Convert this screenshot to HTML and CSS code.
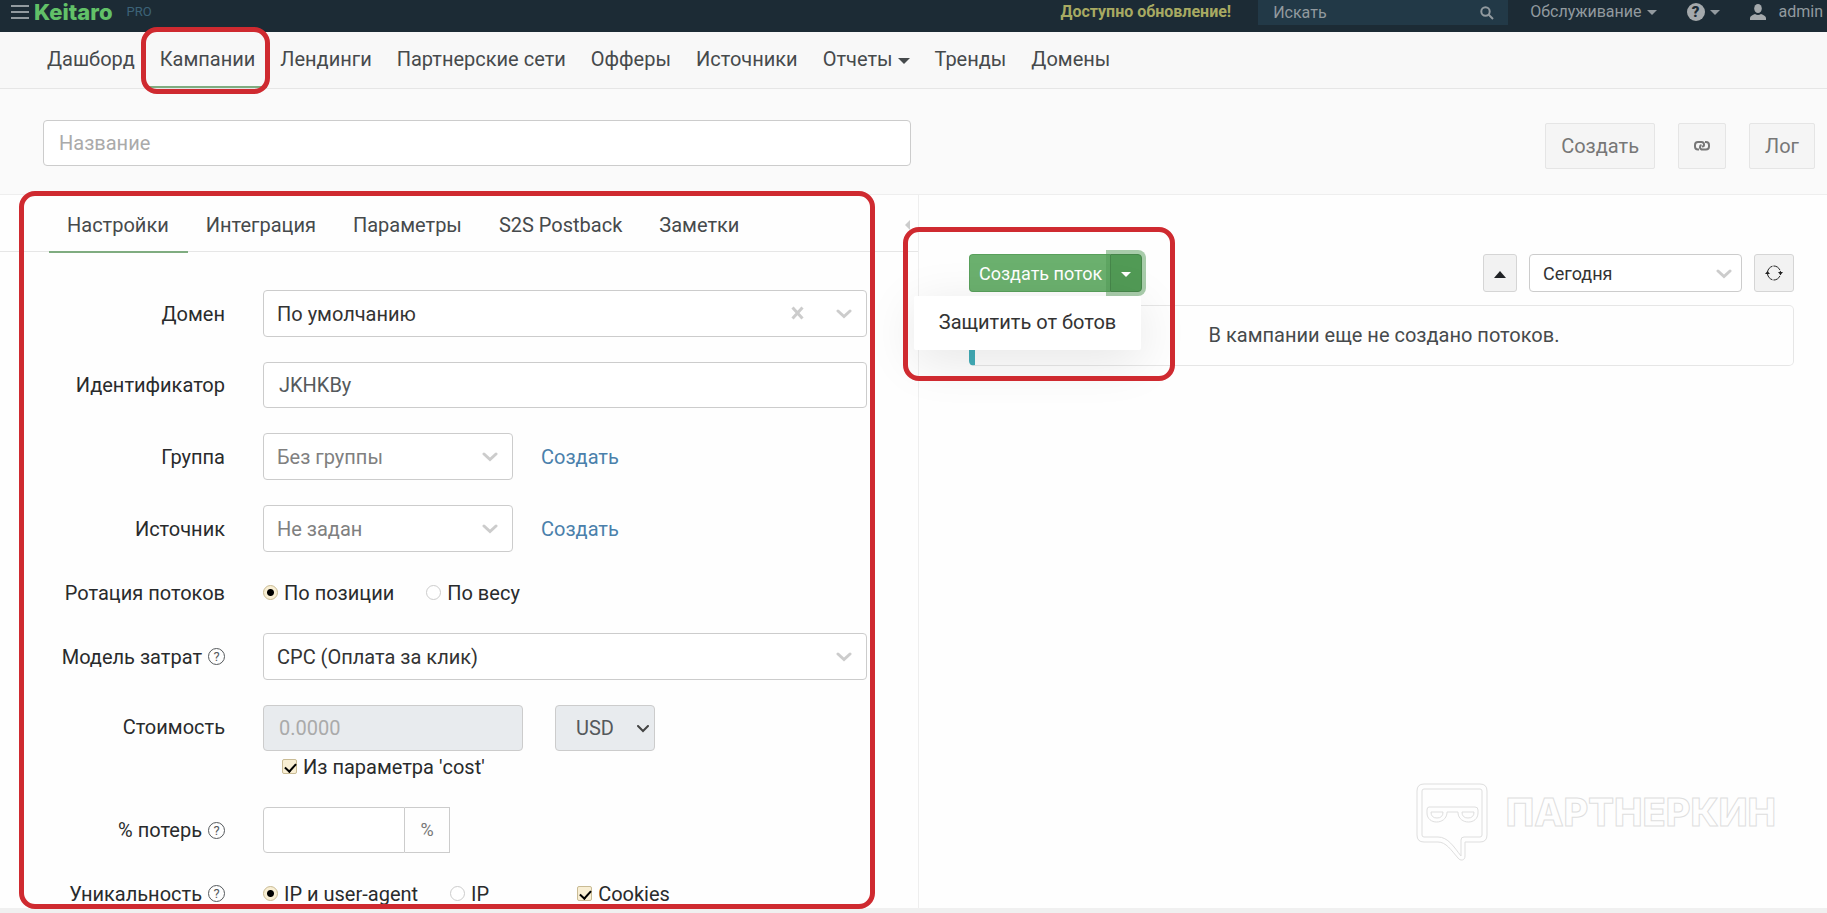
FILE: index.html
```
<!DOCTYPE html>
<html lang="ru">
<head>
    <meta charset="UTF-8">
    <meta name="viewport" content="width=device-width, initial-scale=1.0">
    <title>Keitaro - Кампании</title>
    <link rel="stylesheet" href="styles.css">
</head>
<body>
    <header class="topbar">
        <button class="menu-button" aria-label="Меню"><span></span><span></span><span></span></button>
        <a href="#" class="logo">Keitaro</a>
        <span class="edition">PRO</span>
        <a href="#" class="update-link">Доступно обновление!</a>
        <div class="search">
            <input type="text" placeholder="Искать" aria-label="Искать">
            <svg width="14" height="14" viewBox="0 0 14 14" fill="none" stroke="#929a9f" stroke-width="2"><circle cx="5.5" cy="5.5" r="4.2"/><path d="M8.5 8.5L13 13"/></svg>
        </div>
        <a href="#" class="top-link service">Обслуживание <i class="caret"></i></a>
        <a href="#" class="top-link help" aria-label="Помощь">
            <span class="help-badge">?</span>
            <i class="caret"></i>
        </a>
        <a href="#" class="top-link user">
            <svg width="16" height="16" viewBox="0 0 16 16" fill="#a4a9ac"><ellipse cx="8" cy="4.5" rx="3.8" ry="4.5"/><path d="M0 16v-2c0-2 2.500-3 5-4 2 1.300 4 1.300 6 0 2.500 1 5 2 5 4v2z"/></svg>
            admin
        </a>
    </header>

    <nav class="nav">
        <a href="#">Дашборд</a>
        <a href="#" class="active">Кампании<span class="mark mark-nav"></span></a>
        <a href="#">Лендинги</a>
        <a href="#">Партнерские сети</a>
        <a href="#">Офферы</a>
        <a href="#">Источники</a>
        <a href="#">Отчеты <i class="caret caret-big"></i></a>
        <a href="#">Тренды</a>
        <a href="#">Домены</a>
    </nav>

    <section class="heading">
        <input type="text" class="control name-input" placeholder="Название" aria-label="Название">
        <div class="actions">
            <button class="action">Создать</button>
            <button class="action action-icon" aria-label="Ссылка">
                <svg width="16" height="12" viewBox="0 0 16 12" fill="none" stroke="#777" stroke-width="2"><path d="M5 9.500H4A3 3 0 0 1 1 6.500V5a3 3 0 0 1 3-3h3.500A2.500 2.500 0 0 1 10 4.500V5q0 1.500-2 1.500"/><path d="M11 2h1a3 3 0 0 1 3 3v1.500a3 3 0 0 1-3 3H8.500A2.500 2.500 0 0 1 6 7.500V7q0-1.500 1.500-2"/></svg>
            </button>
            <button class="action">Лог</button>
        </div>
    </section>

    <main class="content">
        <section class="settings">
            <div class="tabs">
                <a href="#" class="active">Настройки</a>
                <a href="#">Интеграция</a>
                <a href="#">Параметры</a>
                <a href="#">S2S Postback</a>
                <a href="#">Заметки</a>
                <button class="collapse" aria-label="Свернуть"></button>
            </div>

            <form class="form">
                <div class="row">
                    <label for="domain">Домен</label>
                    <div class="select">
                        <select id="domain" class="control"><option>По умолчанию</option></select>
                        <button type="button" class="clear" aria-label="Очистить"><svg width="13" height="14" viewBox="0 0 13 14" stroke="#ccc" stroke-width="3"><path d="M1.500 1.500l10 11M11.500 1.500l-10 11"/></svg></button>
                        <svg class="chevron" width="16" height="10" viewBox="0 0 16 10"><path d="M2 2l6 5.500L14 2"/></svg>
                    </div>
                </div>
                <div class="row">
                    <label for="alias">Идентификатор</label>
                    <input type="text" id="alias" class="control" value="JKHKBy">
                </div>
                <div class="row">
                    <label for="group">Группа</label>
                    <div class="inline">
                        <div class="select select-short">
                            <select id="group" class="control muted"><option>Без группы</option></select>
                            <svg class="chevron" width="16" height="10" viewBox="0 0 16 10"><path d="M2 2l6 5.500L14 2"/></svg>
                        </div>
                        <a href="#">Создать</a>
                    </div>
                </div>
                <div class="row">
                    <label for="source">Источник</label>
                    <div class="inline">
                        <div class="select select-short">
                            <select id="source" class="control muted"><option>Не задан</option></select>
                            <svg class="chevron" width="16" height="10" viewBox="0 0 16 10"><path d="M2 2l6 5.500L14 2"/></svg>
                        </div>
                        <a href="#">Создать</a>
                    </div>
                </div>
                <div class="row">
                    <span class="label">Ротация потоков</span>
                    <div class="choices">
                        <label><input type="radio" name="rotation" checked>По позиции</label>
                        <label><input type="radio" name="rotation">По весу</label>
                    </div>
                </div>
                <div class="row">
                    <label for="model">Модель затрат <i class="hint">?</i></label>
                    <div class="select">
                        <select id="model" class="control"><option>CPC (Оплата за клик)</option></select>
                        <svg class="chevron" width="16" height="10" viewBox="0 0 16 10"><path d="M2 2l6 5.500L14 2"/></svg>
                    </div>
                </div>
                <div class="row row-top">
                    <label for="cost">Стоимость</label>
                    <div>
                        <div class="cost">
                            <input type="text" id="cost" class="control" placeholder="0.0000" disabled>
                            <div class="select currency">
                                <select class="control" aria-label="Валюта" disabled><option>USD</option></select>
                                <svg class="chevron" width="12" height="8" viewBox="0 0 12 8"><path d="M1 1l5 5 5-5"/></svg>
                            </div>
                        </div>
                        <div class="choices cost-auto">
                            <label><input type="checkbox" checked>Из параметра 'cost'</label>
                        </div>
                    </div>
                </div>
                <div class="row">
                    <label for="loss">% потерь <i class="hint">?</i></label>
                    <div class="loss">
                        <input type="text" id="loss" class="control">
                        <span class="addon">%</span>
                    </div>
                </div>
                <div class="row">
                    <span class="label">Уникальность <i class="hint">?</i></span>
                    <div class="choices">
                        <label><input type="radio" name="unique" checked>IP и user-agent</label>
                        <label><input type="radio" name="unique">IP</label>
                        <label class="cookies"><input type="checkbox" checked>Cookies</label>
                    </div>
                </div>
            </form>
            <span class="mark mark-settings"></span>
        </section>

        <section class="streams">
            <div class="toolbar">
                <div class="split">
                    <button class="split-main">Создать поток</button>
                    <button class="split-toggle" aria-label="Ещё"><i class="caret"></i></button>
                    <div class="dropdown"><a href="#">Защитить от ботов</a></div>
                    <span class="mark mark-split"></span>
                </div>
                <div class="filters">
                    <button class="small-button" aria-label="Свернуть"><i class="caret-up"></i></button>
                    <div class="select period">
                        <select class="control" aria-label="Период"><option>Сегодня</option></select>
                        <svg class="chevron" width="16" height="10" viewBox="0 0 16 10"><path d="M2 2l6 5.500L14 2"/></svg>
                    </div>
                    <button class="small-button refresh" aria-label="Обновить">
                        <svg width="18" height="16" viewBox="0 0 18 16" fill="none" stroke="#222" stroke-width="1"><path d="M2.500 7C3 3.500 6 1 9 1s6 2.500 6.500 6M2.500 9c.5 3.500 3.500 6 6.500 6s6-2.500 6.500-6" stroke-dasharray="8 1"/><path d="M0 9l2.500-3L5 9zM13 7l2.500 3L18 7z" fill="#222" stroke="none"/></svg>
                    </button>
                </div>
            </div>
            <div class="empty">В кампании еще не создано потоков.</div>
            <div class="watermark">
                <svg width="72" height="78" viewBox="0 0 72 78" fill="none" stroke="#dedede"><path d="M8 1h56q7 0 7 7v44q0 7-7 7H49v14c0 5-5 5-7 2C35 67 30 59 22 59H8q-7 0-7-7V8q0-7 7-7z"/><path d="M8 6h56q2 0 2 2v44q0 2-2 2H48q-3 0-3 3v16C38 64 32 54 22 54H8q-2 0-2-2V8q0-2 2-2z"/><path d="M13 24h46q3 0 3 3v3c0 12-19 12-20 0v-1H31v1c-1 12-20 12-20 0v-3q0-3 2-3z"/><path d="M15 29h12q0 6-6 6-6 0-6-6zM46 29h12q0 6-6 6-6 0-6-6z"/></svg>
                <span>ПАРТНЕРКИН</span>
            </div>
        </section>
    </main>
    <footer class="footer"></footer>
</body>
</html>
```

FILE: styles.css
```
* {
    box-sizing: border-box;
}

body {
    margin: 0;
    min-height: 100vh;
    display: flex;
    flex-direction: column;
    font-family: Roboto, Arial, sans-serif;
    font-size: 20px;
    line-height: 30px;
    color: #292b2c;
    background-color: #fefefe;
}

a {
    color: #4a80ab;
    text-decoration: none;
}

button,
input,
select {
    font-family: inherit;
    font-size: inherit;
    color: inherit;
}

button {
    padding: 0;
    cursor: pointer;
}

/* top bar */
.topbar {
    height: 32px;
    padding: 0 4px 8px 11px;
    display: flex;
    align-items: center;
    background-color: #1c2b35;
    font-size: 16px;
    line-height: 24px;
}

.menu-button {
    width: 18px;
    height: 14px;
    display: flex;
    flex-direction: column;
    justify-content: space-between;
    border: none;
    background: none;
}

.menu-button span {
    height: 2px;
    background-color: #929a9f;
}

.logo {
    margin-left: 5px;
    font-family: Inter, sans-serif;
    font-size: 22px;
    font-weight: 800;
    line-height: 22px;
    color: #62c168;
}

.edition {
    margin-left: 14px;
    font-size: 13px;
    color: #3c6378;
}

.update-link {
    margin-left: auto;
    font-weight: bold;
    color: #a8aa62;
}

.search {
    position: relative;
    width: 250px;
    margin: 0 22px 0 27px;
}

.search input {
    display: block;
    width: 100%;
    height: 25px;
    padding: 0 15px;
    border: none;
    background-color: #223947;
}

.search input::placeholder {
    color: #929a9f;
    opacity: 1;
}

.search svg {
    position: absolute;
    top: 6px;
    right: 14px;
}

.top-link {
    display: flex;
    align-items: center;
    gap: 5px;
    color: #929a9f;
}

.help {
    margin-left: 30px;
}

.help-badge {
    width: 18px;
    height: 18px;
    border-radius: 50%;
    background-color: #a4a9ac;
    font-size: 15px;
    font-weight: 900;
    line-height: 18px;
    text-align: center;
    color: #1c2b35;
}

.user {
    margin-left: 30px;
    gap: 13px;
}

.caret {
    display: inline-block;
    border: 5px solid transparent;
    border-top-color: currentColor;
    border-bottom: none;
    vertical-align: middle;
}

.caret-big {
    border-width: 6px;
    border-bottom: none;
}

/* main navigation */
.nav {
    height: 57px;
    padding-left: 34px;
    display: flex;
    background-color: #f8f8f8;
    border-bottom: 1px solid #e6e6e6;
}

.nav a {
    position: relative;
    padding: 12px 12px 0 13px;
    color: #464a4c;
    white-space: nowrap;
}

.nav .active {
    border-bottom: 2px solid #7fac80;
}

/* campaign name and actions */
.heading {
    height: 106px;
    padding: 2px 12px 0 43px;
    display: flex;
    align-items: center;
    justify-content: space-between;
    background-color: #fafafa;
    border-bottom: 1px solid #eee;
}

.control {
    display: block;
    width: 100%;
    height: 46px;
    padding: 0 15px;
    border: 1px solid #ccc;
    border-radius: 4px;
    background-color: #fff;
    color: #55595c;
}

.control::placeholder {
    color: #aaa;
    opacity: 1;
}

.name-input {
    width: 49%;
}

.actions {
    display: flex;
    gap: 23px;
    padding-top: 6px;
}

.action {
    height: 46px;
    padding: 0 15px;
    border: 1px solid #e5e5e5;
    border-radius: 2px;
    background-color: #f5f5f5;
    color: #777;
}

.action svg {
    display: block;
}

/* two columns */
.content {
    flex: 1;
    display: grid;
    grid-template-columns: 919fr 908fr;
}

.settings {
    position: relative;
    border-right: 1px solid #eee;
}

.tabs {
    height: 57px;
    padding: 0 8px 0 49px;
    display: flex;
    border-bottom: 1px solid #e6e6e6;
}

.tabs a {
    height: 58px;
    padding: 15px 19px 0 18px;
    color: #464a4c;
}

.tabs .active {
    border-bottom: 2px solid #7fac80;
}

.collapse {
    margin: 25px 0 0 auto;
    height: 10px;
    border: 5px solid transparent;
    border-right-color: #ccc;
    border-left: none;
    background: none;
}

.form {
    padding: 38px 51px 0 45px;
}

.row {
    display: grid;
    grid-template-columns: 180px 1fr;
    column-gap: 38px;
    align-items: center;
    margin-bottom: 25px;
}

.row:last-child {
    height: 28px;
    margin-bottom: 0;
}

.row > label,
.label {
    display: flex;
    justify-content: flex-end;
    align-items: center;
    gap: 6px;
    white-space: nowrap;
}

.row-top {
    align-items: start;
}

.row-top > label {
    padding-top: 7px;
}

.hint {
    width: 17px;
    height: 17px;
    border: 1px solid #55595c;
    border-radius: 50%;
    font-size: 13px;
    font-style: normal;
    line-height: 15px;
    text-align: center;
    color: #55595c;
}

.select {
    position: relative;
}

.select .control {
    appearance: none;
    height: 47px;
    padding: 0 13px;
    color: #333;
}

.select .muted {
    color: #808080;
}

.chevron {
    position: absolute;
    top: 50%;
    right: 15px;
    margin-top: -5px;
    fill: none;
    stroke: #ccc;
    stroke-width: 3;
    stroke-linecap: round;
    pointer-events: none;
}

.clear {
    position: absolute;
    top: 16px;
    right: 63px;
    height: 14px;
    border: none;
    background: none;
}

.clear svg {
    display: block;
}

.inline {
    display: flex;
    align-items: center;
    gap: 28px;
}

.select-short {
    width: 250px;
}

.choices {
    display: flex;
    gap: 32px;
    height: 31px;
}

.choices label {
    display: flex;
    align-items: center;
    gap: 6px;
}

.choices input {
    appearance: none;
    width: 15px;
    height: 15px;
    margin: 0;
    border: 1px solid #ccc;
    background-color: #fff;
}

.choices input[type="radio"] {
    border-radius: 50%;
}

.choices input[type="checkbox"] {
    position: relative;
    border-radius: 2px;
}

.choices input:checked {
    border-color: #c9bb94;
    background-color: #f8eed3;
}

.choices input[type="radio"]:checked {
    background-image: radial-gradient(circle, #000 3px, transparent 4px);
}

.choices input[type="checkbox"]:checked::after {
    content: "";
    position: absolute;
    top: 1px;
    left: 4px;
    width: 5px;
    height: 9px;
    border: solid #000;
    border-width: 0 2px 2px 0;
    transform: rotate(42deg);
}

.choices .cookies {
    margin-left: 56px;
}

.cost {
    display: flex;
    gap: 32px;
}

.cost > .control {
    width: 260px;
}

.cost .control:disabled {
    background-color: #e8ebee;
    color: #55595c;
    opacity: 1;
}

.currency {
    width: 100px;
}

.currency .control {
    height: 46px;
    padding: 0 20px;
}

.currency .chevron {
    right: 6px;
    margin-top: -3px;
    stroke: #444;
    stroke-width: 2;
}

.cost-auto {
    padding-left: 19px;
}

.loss {
    display: flex;
    width: 187px;
}

.loss .control {
    border-radius: 4px 0 0 4px;
}

.addon {
    flex: 0 0 45px;
    height: 46px;
    border: 1px solid #ccc;
    border-left: none;
    font-size: 18px;
    line-height: 44px;
    text-align: center;
    color: #777;
}

/* streams column */
.streams {
    display: flex;
    flex-direction: column;
    padding: 59px 33px 47px 50px;
}

.toolbar {
    display: flex;
    justify-content: space-between;
    font-size: 18px;
}

.split {
    position: relative;
    display: flex;
    height: 38px;
}

.split-main,
.split-toggle {
    border: 1px solid #59a05c;
    color: #fff;
}

.split-main {
    padding: 0 8px 0 9px;
    border-right: none;
    border-radius: 4px 0 0 4px;
    background-color: #6bb06e;
}

.split-toggle {
    width: 32px;
    border-color: #46864a;
    border-radius: 0 4px 4px 0;
    background-color: #519a55;
    box-shadow: 0 0 0 4px rgba(81, 154, 85, 0.5);
}

.dropdown {
    position: absolute;
    z-index: 2;
    top: 42px;
    right: 1px;
    padding: 11px 25px 13px;
    border-radius: 2px;
    background-color: #fff;
    box-shadow: 0 10px 50px rgba(0, 0, 0, 0.1);
    font-size: 20px;
    white-space: nowrap;
}

.dropdown a {
    color: #333;
}

.filters {
    display: flex;
    gap: 12px;
}

.small-button {
    width: 34px;
    height: 38px;
    border: 1px solid #d5d5d5;
    border-radius: 3px;
    background-color: #f2f2f2;
}

.refresh {
    width: 40px;
}

.small-button svg {
    display: block;
    margin: 0 auto;
}

.caret-up {
    display: inline-block;
    border: 6px solid transparent;
    border-bottom: 7px solid #1f2225;
    border-top: none;
    vertical-align: middle;
}

.period {
    width: 213px;
}

.period .control {
    height: 38px;
}

.period .chevron {
    right: 10px;
    margin-top: -4px;
}

.empty {
    margin-top: 13px;
    padding: 14px 15px 15px;
    border: 1px solid #e6e6e6;
    border-left: 6px solid #42adb8;
    border-radius: 5px;
    text-align: center;
    color: #464a4c;
}

.watermark {
    display: flex;
    gap: 18px;
    margin: auto 18px 0 auto;
    font-family: Inter, sans-serif;
    font-size: 38px;
    font-weight: 800;
    line-height: 58px;
    color: #fefefe;
    -webkit-text-stroke: 1px #dedede;
}

.footer {
    height: 5px;
    background-color: #f0f0f0;
}

/* red highlight frames */
.mark {
    position: absolute;
    z-index: 3;
    border: 5px solid #cf2a30;
    border-radius: 16px;
    pointer-events: none;
}

.mark-nav {
    top: -5px;
    right: -3px;
    bottom: -8px;
    left: -6px;
}

.mark-settings {
    top: -4px;
    right: 43px;
    bottom: -1px;
    left: 19px;
}

.mark-split {
    top: -27px;
    right: -33px;
    bottom: -89px;
    left: -66px;
}
```
